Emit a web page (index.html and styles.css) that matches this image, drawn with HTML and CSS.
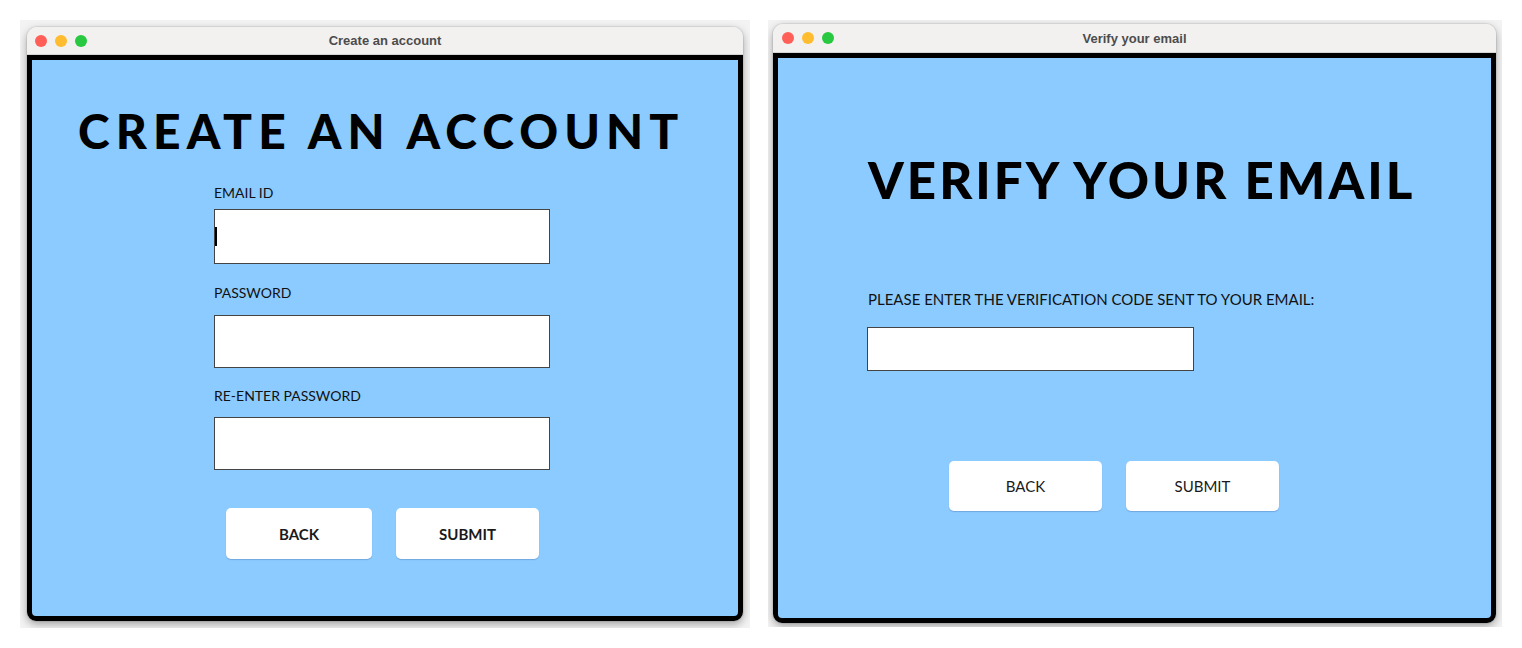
FILE: index.html
```html
<!DOCTYPE html>
<html>
<head>
<meta charset="utf-8">
<link rel="stylesheet" href="styles.css">
</head>
<body>
<div class="screen">
  <div class="shot shot-left">
    <div class="win win-left">
      <div class="titlebar">
        <div class="lights"><span class="light red"></span><span class="light yellow"></span><span class="light green"></span></div>
        <div class="ttl">Create an account</div>
        <div></div>
      </div>
      <div class="frame frame-left">
        <h1 class="heading heading-left">CREATE AN ACCOUNT</h1>
        <div class="form-left">
          <div class="lbl lbl-1">EMAIL ID</div>
          <div class="field field-1"><span class="caret"></span></div>
          <div class="lbl lbl-2">PASSWORD</div>
          <div class="field field-2"></div>
          <div class="lbl lbl-3">RE-ENTER PASSWORD</div>
          <div class="field field-3"></div>
          <div class="btns btns-left">
            <div class="btn btn-l1">BACK</div>
            <div class="btn btn-l2">SUBMIT</div>
          </div>
        </div>
      </div>
    </div>
  </div>
  <div class="shot shot-right">
    <div class="win win-right">
      <div class="titlebar">
        <div class="lights"><span class="light red"></span><span class="light yellow"></span><span class="light green"></span></div>
        <div class="ttl">Verify your email</div>
        <div></div>
      </div>
      <div class="frame frame-right">
        <h1 class="heading heading-right">VERIFY YOUR EMAIL</h1>
        <div class="lbl lbl-code">PLEASE ENTER THE VERIFICATION CODE SENT TO YOUR EMAIL:</div>
        <div class="field field-right"></div>
        <div class="btns btns-right">
          <div class="btn btn-r">BACK</div>
          <div class="btn btn-r">SUBMIT</div>
        </div>
      </div>
    </div>
  </div>
</div>
</body>
</html>
```

FILE: styles.css
```css
* { box-sizing: border-box; }
html, body { margin: 0; padding: 0; background: #ffffff; }
body { width: 1522px; height: 648px; overflow: hidden; font-family: Lato, "Open Sans", sans-serif; }

.screen { display: flex; padding: 20px 0 0 20px; gap: 18px; }

.shot { overflow: hidden; background: #f3f3f3; }
.shot-left { width: 730px; height: 608px; padding: 7px 0 0 7px; }
.shot-right { width: 734px; height: 607px; padding: 4px 0 0 5px; }

.win { display: flex; flex-direction: column; border-radius: 10px 10px 9px 9px; box-shadow: 0 3px 9px rgba(0,0,0,0.35), 0 0 0 1px rgba(0,0,0,0.06); }
.win-left { width: 716px; height: 594px; }
.win-right { width: 723px; height: 599px; }

.titlebar { display: grid; grid-template-columns: 1fr auto 1fr; align-items: center; height: 28px; background: #f2f1f0; border-radius: 10px 10px 0 0; border-bottom: 1px solid #d6d6d6; }
.win-right .titlebar { height: 29px; }
.lights { display: flex; gap: 8px; padding-left: 8px; }
.win-right .lights { padding-left: 9px; }
.light { width: 12px; height: 12px; border-radius: 50%; }
.red { background: #ff5f57; }
.yellow { background: #febc2e; }
.green { background: #28c840; }
.ttl { font-family: "Liberation Sans", Arial, sans-serif; font-weight: bold; font-size: 13px; color: #4c4c4c; }

.frame { flex: 1; background: #8ccbff; border: 5px solid #000; border-radius: 0 0 9px 9px; }

.heading { margin: 0; font-family: Lato, sans-serif; font-weight: 900; color: #000; line-height: 1; white-space: nowrap; }
.heading-left { font-size: 48px; letter-spacing: 6.1px; padding: 47px 0 0 46px; }
.heading-right { font-size: 51px; letter-spacing: 3.05px; padding: 96px 0 0 90px; }

.lbl { font-size: 14px; line-height: 14px; color: #111; white-space: nowrap; }
.form-left { padding-left: 182px; display: flex; flex-direction: column; align-items: flex-start; }
.lbl-1 { margin-top: 31px; margin-bottom: 9px; }
.lbl-2 { margin-top: 22px; margin-bottom: 15px; }
.lbl-3 { margin-top: 21px; margin-bottom: 14px; }

.field { background: #fff; border: 1px solid #444; position: relative; }
.field-1 { width: 336px; height: 55px; }
.field-2, .field-3 { width: 336px; height: 53px; }
.caret { position: absolute; left: 0; top: 17px; width: 2px; height: 19px; background: #000; }

.btns { display: flex; }
.btns-left { gap: 24px; margin: 38px 0 0 12px; }
.btn { background: #fff; border-radius: 5px; display: flex; align-items: center; justify-content: center; font-size: 15px; color: #1a1a1a; box-shadow: 0 1px 1px rgba(60,100,160,0.35); }
.btn-l1 { width: 146px; height: 51px; font-weight: 700; }
.btn-l2 { width: 143px; height: 51px; font-weight: 700; }

.lbl-code { font-size: 15px; line-height: 15px; margin: 0 0 0 90px; padding-top: 87px; }
.field-right { width: 327px; height: 44px; margin: 20px 0 0 89px; }
.btns-right { gap: 24px; margin: 90px 0 0 171px; }
.btn-r { width: 153px; height: 50px; }
```
